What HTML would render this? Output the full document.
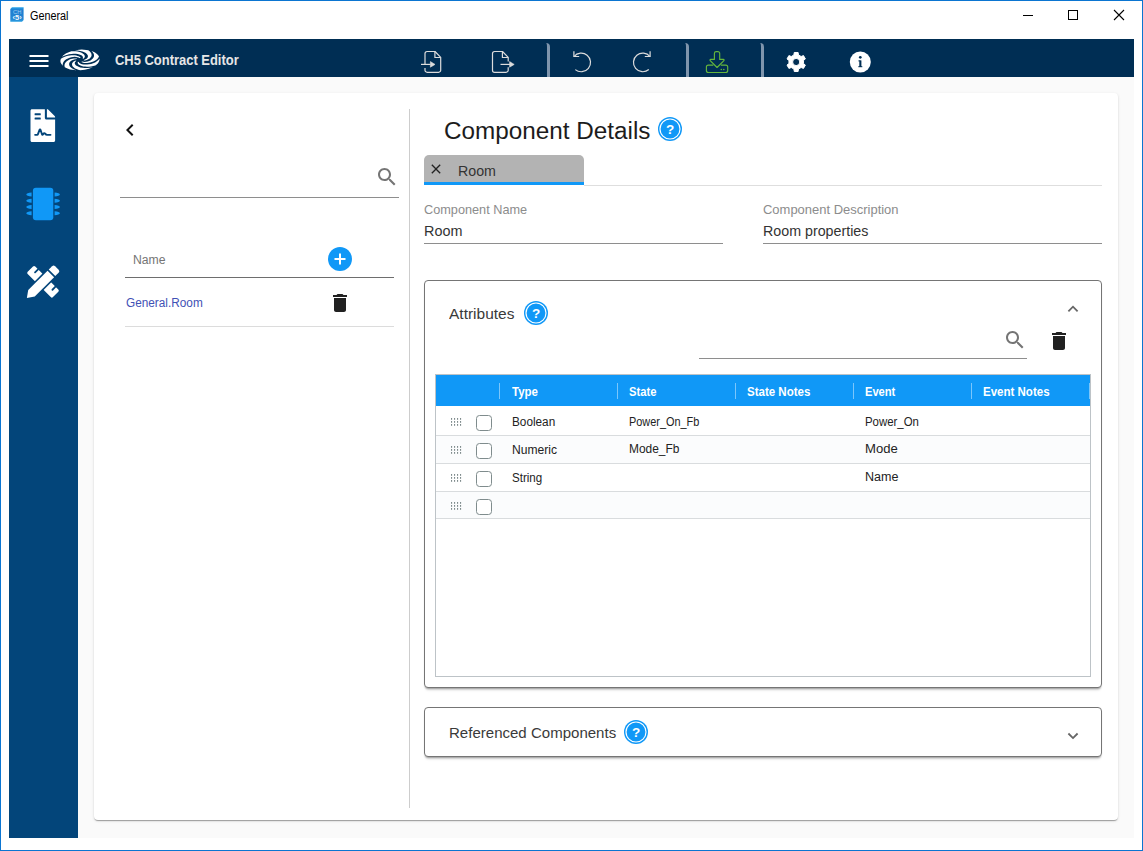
<!DOCTYPE html>
<html lang="en">
<head>
<meta charset="utf-8">
<title>General</title>
<style>
*{box-sizing:border-box;margin:0;padding:0}
html,body{width:1143px;height:851px;overflow:hidden;background:#fff}
body{font-family:"Liberation Sans",sans-serif;color:#212121;position:relative}
.abs{position:absolute}
#win{position:absolute;left:0;top:0;width:1143px;height:851px;border:1px solid #0b75d1;background:#fff}
.t{position:absolute;white-space:nowrap;line-height:1}
svg{position:absolute;overflow:visible}
/* title bar */
/* app */
#bar{left:9px;top:39px;width:1125px;height:38px;background:#002e54}
#side{left:9px;top:77px;width:69px;height:761px;background:#03457a}
#bg{left:78px;top:77px;width:1056px;height:761px;background:#fafafa}
#card{left:94px;top:93px;width:1024px;height:727px;background:#fff;border-radius:4px;box-shadow:0 2px 1px -1px rgba(0,0,0,.2),0 1px 1px 0 rgba(0,0,0,.14),0 1px 3px 0 rgba(0,0,0,.12)}
.sep{position:absolute;top:43px;width:4px;height:34px;border-right:3px solid #7f95ad;border-top-right-radius:4px}
.hl{position:absolute;height:1px}
.vl{position:absolute;width:1px}
.panel{position:absolute;border:1px solid #757575;border-radius:4px;background:#fff;box-shadow:0 2px 2px -1px rgba(0,0,0,.32),0 4px 3px -2px rgba(0,0,0,.12)}
</style>
</head>
<body>
<div id="win"></div>
<!-- title bar -->

<!-- title bar icon + controls -->
<svg style="left:10px;top:7px" width="14" height="15" viewBox="0 0 14 15">
  <defs><linearGradient id="gi" x1="0" y1="0" x2="0" y2="1"><stop offset="0" stop-color="#2aa4ea"/><stop offset=".18" stop-color="#1f7ed0"/><stop offset=".8" stop-color="#2385d3"/><stop offset="1" stop-color="#2b9fe2"/></linearGradient></defs>
  <path d="M2 0.3H13.6V13L12 14.7H0.3V2Z" fill="url(#gi)"/>
  <text x="7.2" y="7" font-family="Liberation Sans, sans-serif" font-size="6.2" fill="#9fcdf1" text-anchor="middle" textLength="8.4" lengthAdjust="spacingAndGlyphs">CH</text>
  <text x="7.1" y="13" font-family="Liberation Sans, sans-serif" font-size="6.6" font-weight="bold" fill="#eef7fe" text-anchor="middle" textLength="9.2" lengthAdjust="spacingAndGlyphs">‹5›</text>
</svg>
<svg style="left:1018px;top:5px" width="112" height="20" viewBox="1018 5 112 20" fill="none" stroke="#000" stroke-width="1">
  <path d="M1023 15.5H1033"/>
  <rect x="1068.5" y="10.5" width="9" height="9"/>
  <path d="M1114 10L1124 20M1124 10L1114 20" stroke-width="1.1"/>
</svg>
<!-- app chrome -->
<div class="abs" id="bar"></div>
<div class="abs" id="side"></div>
<div class="abs" id="bg"></div>
<div class="abs" id="card"></div>

<!-- toolbar -->
<svg style="left:9px;top:39px" width="1125" height="38" viewBox="9 39 1125 38">
  <g id="tb">
  <!-- hamburger -->
  <path d="M29.5 55h19v2h-19zM29.5 60h19v2h-19zM29.5 65h19v2h-19z" fill="#fff"/>
  <!-- swirl -->
  <path id="swirl" d="M78.8 62.0L79.1 62.7L79.8 63.3L80.7 63.8L82.0 64.2L83.5 64.5L85.2 64.6L87.1 64.6L89.1 64.3L91.1 63.9L93.2 63.2L95.1 62.4L96.8 61.3L98.4 60.0L99.6 58.6L99.5 59.8L99.2 61.0L98.6 62.2L97.8 63.4L96.7 64.5L95.4 65.6L93.2 66.1L91.1 66.5L89.0 66.7L87.0 66.7L85.1 66.6L83.4 66.4L81.8 66.0L80.5 65.6L79.5 65.0L78.6 64.4L78.1 63.8L77.7 63.1L77.7 62.5L77.8 61.8ZM76.3 60.9L75.6 61.5L75.0 62.2L74.8 62.9L74.8 63.7L75.2 64.6L76.0 65.4L77.1 66.1L78.6 66.8L80.3 67.4L82.4 67.7L84.8 67.9L87.3 67.9L90.0 67.7L92.8 67.2L90.9 68.0L89.0 68.7L86.9 69.3L84.7 69.8L82.5 70.1L80.2 70.3L78.2 69.8L76.5 69.1L75.0 68.4L73.9 67.6L73.0 66.7L72.4 65.9L72.1 65.0L72.0 64.1L72.2 63.3L72.7 62.5L73.3 61.8L74.1 61.2L75.1 60.7L76.1 60.4ZM76.6 59.1L75.4 59.2L74.1 59.5L72.8 59.9L71.6 60.5L70.6 61.2L69.8 62.1L69.3 63.1L69.1 64.2L69.3 65.3L69.9 66.4L70.9 67.5L72.3 68.6L74.1 69.5L76.3 70.3L74.1 70.1L72.0 69.8L70.0 69.4L68.1 68.8L66.4 68.1L64.8 67.3L64.5 66.1L64.5 64.9L64.8 63.8L65.4 62.7L66.2 61.8L67.2 60.9L68.3 60.2L69.5 59.6L70.9 59.1L72.2 58.7L73.6 58.5L74.9 58.4L76.2 58.5L77.3 58.6ZM79.5 58.0L78.6 57.5L77.5 57.2L76.2 56.9L74.7 56.8L73.0 56.9L71.3 57.2L69.6 57.7L67.9 58.4L66.3 59.2L64.9 60.3L63.8 61.5L63.1 62.8L62.7 64.2L62.7 65.7L61.8 64.6L61.1 63.5L60.6 62.4L60.4 61.2L60.5 60.0L60.9 58.8L62.5 57.8L64.2 57.0L66.1 56.3L67.9 55.8L69.8 55.5L71.6 55.3L73.3 55.3L74.9 55.3L76.4 55.6L77.6 55.9L78.7 56.3L79.6 56.8L80.2 57.3L80.6 57.9ZM82.7 58.4L82.9 57.7L82.9 57.0L82.5 56.3L81.8 55.6L80.7 55.0L79.3 54.4L77.7 54.0L75.8 53.8L73.6 53.8L71.4 53.9L69.0 54.3L66.6 54.9L64.3 55.7L62.1 56.8L63.1 55.6L64.4 54.6L65.8 53.6L67.5 52.7L69.4 51.9L71.3 51.2L73.6 51.2L75.8 51.3L77.8 51.6L79.5 52.1L81.1 52.6L82.4 53.2L83.4 53.9L84.1 54.6L84.6 55.4L84.8 56.1L84.8 56.9L84.5 57.6L84.0 58.2L83.4 58.8ZM83.9 60.0L85.0 59.6L86.0 59.1L86.9 58.4L87.5 57.7L87.9 56.8L87.9 55.8L87.6 54.9L86.8 53.9L85.8 53.0L84.3 52.2L82.4 51.4L80.2 50.9L77.7 50.5L74.9 50.3L77.2 49.9L79.5 49.7L81.7 49.6L84.0 49.7L86.2 49.9L88.3 50.2L89.6 51.2L90.5 52.2L91.2 53.2L91.5 54.3L91.6 55.3L91.4 56.2L90.9 57.1L90.2 58.0L89.4 58.7L88.4 59.3L87.3 59.8L86.1 60.2L84.9 60.4L83.7 60.6ZM82.2 61.6L83.3 61.8L84.7 61.9L86.1 61.8L87.6 61.5L89.1 61.0L90.5 60.4L91.7 59.6L92.8 58.6L93.5 57.5L94.0 56.3L94.0 55.0L93.7 53.7L92.9 52.4L91.6 51.1L93.4 51.8L95.0 52.6L96.3 53.5L97.5 54.5L98.4 55.5L99.0 56.6L98.3 57.8L97.3 58.9L96.1 59.9L94.8 60.8L93.3 61.5L91.8 62.1L90.2 62.5L88.6 62.8L87.1 63.0L85.6 63.0L84.3 62.9L83.1 62.7L82.0 62.3L81.2 61.9Z" fill="#fff"/>
  <!-- file import -->
  <g fill="none" stroke="#dcdcdc" stroke-width="1.2" stroke-linejoin="round">
    <path d="M425 64.4V53.6a2.1 2.1 0 0 1 2.1-2.1H435l5.7 5.9V70.2a2.1 2.1 0 0 1-2.1 2.1H427.1a2.1 2.1 0 0 1-2.1-2.1V68"/>
    <path d="M434.9 51.6V57.5h5.7"/>
    <path d="M421 64.4h9.6"/>
    <path d="M430.4 61.6L435 64.4L430.4 67.2Z" fill="#dcdcdc" stroke-width=".6"/>
  </g>
  <!-- file export -->
  <g fill="none" stroke="#dcdcdc" stroke-width="1.2" stroke-linejoin="round">
    <path d="M508.2 61.6V57.4L502.5 51.5H494.6a2.1 2.1 0 0 0-2.1 2.1V70.2a2.1 2.1 0 0 0 2.1 2.1H506.1a2.1 2.1 0 0 0 2.1-2.1V67.2"/>
    <path d="M502.4 51.6V57.5h5.7"/>
    <path d="M500.5 64.4h9.6"/>
    <path d="M509.6 61.6L514.2 64.4L509.6 67.2Z" fill="#dcdcdc" stroke-width=".6"/>
  </g>

  <!-- undo / redo -->
  <g fill="none" stroke="#dcdcdc" stroke-width="1.2">
    <path d="M574.0 56.6A9.3 9.3 0 1 1 575.3 69.6"/>
    <path d="M573.9 51.2V56.5H579.2"/>
    <path d="M650.0 56.6A9.3 9.3 0 1 0 648.8 69.5"/>
    <path d="M650.1 51.2V56.5H644.8"/>
  </g>
  <!-- download -->
  <g fill="none" stroke="#64b63c" stroke-width="1.15" stroke-linejoin="round">
    <path d="M713.3 65.1H708.4a2 2 0 0 0-2 2V70.5a2 2 0 0 0 2 2H725.7a2 2 0 0 0 2-2V67.1a2 2 0 0 0-2-2H720.8"/>
    <path d="M714.4 59.4V53.4a1.8 1.8 0 0 1 1.8-1.8H717.9a1.8 1.8 0 0 1 1.8 1.8V59.4H723.4a.7.7 0 0 1 .5 1.2L717.05 67.5L710.2 60.6a.7.7 0 0 1 .5-1.2Z"/>
  </g>
  <circle cx="721.3" cy="69.5" r=".8" fill="#64b63c"/><circle cx="723.8" cy="69.5" r=".8" fill="#64b63c"/>
  <!-- gear -->
  <g transform="translate(796.2 62)" fill="#fff">
    <path id="gear" d="M7.24 1.54L9.19 3.09L7.28 6.41L4.95 5.50L2.29 7.04L1.92 9.51L-1.92 9.51L-2.29 7.04L-4.95 5.50L-7.28 6.41L-9.19 3.09L-7.24 1.54L-7.24 -1.54L-9.19 -3.09L-7.28 -6.41L-4.95 -5.50L-2.29 -7.04L-1.92 -9.51L1.92 -9.51L2.29 -7.04L4.95 -5.50L7.28 -6.41L9.19 -3.09L7.24 -1.54ZM3.60 0A3.60 3.60 0 1 0 -3.60 0A3.60 3.60 0 1 0 3.60 0Z" stroke="#fff" stroke-width="1" stroke-linejoin="round" fill-rule="evenodd"/>
  </g>
  <!-- info -->
  <circle cx="860.3" cy="62" r="10.5" fill="#fff"/>
  <rect x="859.3" y="60.4" width="2.1" height="6.6" fill="#002e54"/>
  <rect x="858.4" y="60.4" width="2" height="1" fill="#002e54"/>
  <rect x="858.3" y="66.2" width="4" height="1" fill="#002e54"/>
  <circle cx="860.3" cy="57.3" r="1.35" fill="#002e54"/>
  </g>
</svg>
<div class="sep" style="left:546px"></div>
<div class="sep" style="left:685px"></div>
<div class="sep" style="left:760px"></div>

<!-- sidebar icons -->
<svg style="left:9px;top:77px" width="69" height="761" viewBox="9 77 69 761">
  <!-- file-contract -->
  <g transform="translate(30.5 109.2) scale(0.0641)" fill="#fff">
    <path d="M224 136V0H24C10.7 0 0 10.7 0 24v464c0 13.300 10.700 24 24 24h336c13.300 0 24-10.700 24-24V160H248c-13.200 0-24-10.800-24-24z"/>
    <path d="M384 121.900v6.100H256V0h6.100c6.400 0 12.500 2.500 17 7l97.900 98c4.500 4.500 7 10.600 7 16.900z"/>
    <rect x="64" y="64" width="96" height="32" rx="8" fill="#03457a"/>
    <rect x="64" y="128" width="96" height="32" rx="8" fill="#03457a"/>
    <path d="M72 400h30c8 0 13-6 16-14l22-62c3-9 14-9 17 0l24 70c2 7 9 8 13 2l8-13c6-10 19-10 26-1 8 11 16 18 30 18h54" fill="none" stroke="#03457a" stroke-width="30" stroke-linecap="round" stroke-linejoin="round"/>
  </g>
  <!-- microchip (active) -->
  <g fill="#1098f7">
    <rect x="32.900" y="187.700" width="20.400" height="32.500" rx="3"/>
    <path d="M31.600 192.500v4q-5-.3-5.300-2q.3-1.700 5.300-2zM31.600 198.800v4q-5-.3-5.300-2q.3-1.700 5.300-2zM31.600 205v4q-5-.3-5.300-2q.3-1.700 5.300-2zM31.600 211.300v4q-5-.3-5.300-2q.3-1.700 5.300-2z"/>
    <path d="M54.600 192.500v4q5-.3 5.300-2q-.3-1.700-5.300-2zM54.600 198.800v4q5-.3 5.300-2q-.3-1.700-5.300-2zM54.600 205v4q5-.3 5.300-2q-.3-1.700-5.300-2zM54.600 211.300v4q5-.3 5.300-2q-.3-1.700-5.300-2z"/>
  </g>
  <!-- pencil-ruler -->
  <g transform="translate(43 281.800)">
    <g transform="rotate(45)">
      <rect x="-17.900" y="-5.350" width="35.800" height="10.700" rx="1.600" fill="#fff"/>
      <path d="M-12.300 -5.350v4.300" fill="none" stroke="#03457a" stroke-width="1.800" stroke-linecap="round"/>
      <path d="M12.300 -5.350v4.300" fill="none" stroke="#03457a" stroke-width="1.800" stroke-linecap="round"/>
    </g>
    <g transform="rotate(-45)">
      <path d="M-17 -6.200H21V6.200H-17L-25.300 0Z" fill="#03457a"/>
      <path d="M-16.300 -4.600H11.100V4.600H-16.300L-22.800 0Z" fill="#fff"/>
      <path d="M12.700 -4.600H17.500a2.100 2.100 0 0 1 2.100 2.100V2.500a2.100 2.100 0 0 1-2.100 2.100H12.700Z" fill="#fff"/>
    </g>
  </g>
</svg>
<svg style="left:118px;top:118.3px" width="24" height="24" viewBox="0 0 24 24"><path d="M15.410 16.590L10.830 12l4.580-4.590L14 6l-6 6 6 6 1.410-1.410z" fill="#111"/></svg>
<svg style="left:374.7px;top:165px" width="24" height="24" viewBox="0 0 24 24"><path d="M15.5 14h-.79l-.28-.27C15.41 12.59 16 11.11 16 9.5 16 5.91 13.09 3 9.5 3S3 5.91 3 9.5 5.91 16 9.5 16c1.61 0 3.09-.59 4.23-1.57l.27.28v.79l5 4.990L20.490 19l-4.990-5zm-6 0C7.010 14 5 11.990 5 9.500S7.010 5 9.500 5 14 7.010 14 9.500 11.990 14 9.500 14z" fill="#757575"/></svg>
<div class="hl" style="left:120px;top:197px;width:279px;height:1px;background:#8e8e8e"></div>
<div class="hl" style="left:125px;top:277px;width:269px;height:1px;background:#6e6e6e"></div>
<div class="hl" style="left:125px;top:326px;width:269px;height:1px;background:#dcdcdc"></div>
<svg style="left:328px;top:247px" width="24" height="24" viewBox="0 0 24 24"><circle cx="12" cy="12" r="12" fill="#1098f7"/><path d="M6.500 11h11v2h-11zM11 6.500h2v11h-2z" fill="#fff"/></svg>
<svg style="left:328px;top:291px" width="24" height="24" viewBox="0 0 24 24"><path d="M6 19c0 1.100.900 2 2 2h8c1.100 0 2-.900 2-2V7H6v12zM19 4h-3.500l-1-1h-5l-1 1H5v2h14V4z" fill="#212121"/></svg>
<div class="vl" style="left:409px;top:109px;height:699px;width:1px;background:#cdcdcd"></div>
<svg style="left:658px;top:117px" width="24" height="24" viewBox="0 0 24 24"><circle cx="12" cy="12" r="12" fill="#1098f7"/><circle cx="12" cy="12" r="10" fill="none" stroke="#fff" stroke-width="1.150"/><text x="12" y="16.800" text-anchor="middle" font-family="Liberation Sans, sans-serif" font-weight="bold" font-size="13.500" fill="#fff">?</text></svg>
<div class="abs" style="left:424px;top:155px;width:160px;height:30px;background:#b3b3b3;border-radius:5px 5px 0 0;border-bottom:3px solid #1098f7"></div>
<div class="hl" style="left:584px;top:184.5px;width:518px;height:1px;background:#dedede"></div>
<svg style="left:428px;top:161.3px" width="16" height="16" viewBox="0 0 24 24"><path d="M19 6.410L17.590 5 12 10.590 6.410 5 5 6.410 10.590 12 5 17.590 6.410 19 12 13.410 17.590 19 19 17.590 13.410 12z" fill="#222"/></svg>
<div class="hl" style="left:424px;top:243px;width:299px;height:1px;background:#8e8e8e"></div>
<div class="hl" style="left:763px;top:243px;width:339px;height:1px;background:#8e8e8e"></div>
<div class="panel" style="left:424px;top:280px;width:678px;height:408px"></div>
<svg style="left:524px;top:301px" width="24" height="24" viewBox="0 0 24 24"><circle cx="12" cy="12" r="12" fill="#1098f7"/><circle cx="12" cy="12" r="10" fill="none" stroke="#fff" stroke-width="1.150"/><text x="12" y="16.800" text-anchor="middle" font-family="Liberation Sans, sans-serif" font-weight="bold" font-size="13.500" fill="#fff">?</text></svg>
<svg style="left:1066px;top:304px" width="14" height="10" viewBox="1066 304 14 10"><path d="M1068.400 311.300L1073 306.700L1077.600 311.300" fill="none" stroke="#666" stroke-width="1.800"/></svg>
<svg style="left:1002.7px;top:328.3px" width="24" height="24" viewBox="0 0 24 24"><path d="M15.5 14h-.79l-.28-.27C15.41 12.59 16 11.11 16 9.5 16 5.91 13.09 3 9.5 3S3 5.91 3 9.5 5.91 16 9.5 16c1.61 0 3.09-.59 4.23-1.57l.27.28v.79l5 4.990L20.490 19l-4.990-5zm-6 0C7.010 14 5 11.990 5 9.500S7.010 5 9.500 5 14 7.010 14 9.500 11.990 14 9.500 14z" fill="#757575"/></svg>
<svg style="left:1046.6px;top:329px" width="24" height="24" viewBox="0 0 24 24"><path d="M6 19c0 1.100.900 2 2 2h8c1.100 0 2-.900 2-2V7H6v12zM19 4h-3.500l-1-1h-5l-1 1H5v2h14V4z" fill="#212121"/></svg>
<div class="hl" style="left:699px;top:358px;width:328px;height:1px;background:#8e8e8e"></div>
<div class="abs" style="left:435px;top:374px;width:656px;height:303px;border:1px solid #bdc3c7;background:#fff"></div>
<div class="abs" style="left:436px;top:375px;width:654px;height:31px;background:#1098f7"></div>
<div class="vl" style="left:499px;top:383px;height:16px;width:1px;background:rgba(255,255,255,.45)"></div>
<div class="vl" style="left:617px;top:383px;height:16px;width:1px;background:rgba(255,255,255,.45)"></div>
<div class="vl" style="left:735px;top:383px;height:16px;width:1px;background:rgba(255,255,255,.45)"></div>
<div class="vl" style="left:853px;top:383px;height:16px;width:1px;background:rgba(255,255,255,.45)"></div>
<div class="vl" style="left:971px;top:383px;height:16px;width:1px;background:rgba(255,255,255,.45)"></div>
<div class="vl" style="left:1089px;top:383px;height:16px;width:1px;background:rgba(255,255,255,.45)"></div>
<div class="abs" style="left:436px;top:406px;width:654px;height:30px;background:#fff;border-bottom:1px solid #d9dcde"></div>
<svg style="left:451px;top:418px" width="11" height="9" viewBox="0 0 11 9" fill="#7f8c8d"><rect x="0" y="0" width="1.100" height="1.800"/><rect x="0" y="3" width="1.100" height="1.800"/><rect x="0" y="6" width="1.100" height="1.800"/><rect x="3" y="0" width="1.100" height="1.800"/><rect x="3" y="3" width="1.100" height="1.800"/><rect x="3" y="6" width="1.100" height="1.800"/><rect x="6" y="0" width="1.100" height="1.800"/><rect x="6" y="3" width="1.100" height="1.800"/><rect x="6" y="6" width="1.100" height="1.800"/><rect x="9" y="0" width="1.100" height="1.800"/><rect x="9" y="3" width="1.100" height="1.800"/><rect x="9" y="6" width="1.100" height="1.800"/></svg>
<div class="abs" style="left:476px;top:415px;width:16px;height:16px;border:1.500px solid #7f8c8d;border-radius:3.500px;background:#fff"></div>
<div class="abs" style="left:436px;top:436px;width:654px;height:28px;background:#fbfcfd;border-bottom:1px solid #d9dcde"></div>
<svg style="left:451px;top:446px" width="11" height="9" viewBox="0 0 11 9" fill="#7f8c8d"><rect x="0" y="0" width="1.100" height="1.800"/><rect x="0" y="3" width="1.100" height="1.800"/><rect x="0" y="6" width="1.100" height="1.800"/><rect x="3" y="0" width="1.100" height="1.800"/><rect x="3" y="3" width="1.100" height="1.800"/><rect x="3" y="6" width="1.100" height="1.800"/><rect x="6" y="0" width="1.100" height="1.800"/><rect x="6" y="3" width="1.100" height="1.800"/><rect x="6" y="6" width="1.100" height="1.800"/><rect x="9" y="0" width="1.100" height="1.800"/><rect x="9" y="3" width="1.100" height="1.800"/><rect x="9" y="6" width="1.100" height="1.800"/></svg>
<div class="abs" style="left:476px;top:443px;width:16px;height:16px;border:1.500px solid #7f8c8d;border-radius:3.500px;background:#fff"></div>
<div class="abs" style="left:436px;top:464px;width:654px;height:28px;background:#fff;border-bottom:1px solid #d9dcde"></div>
<svg style="left:451px;top:474px" width="11" height="9" viewBox="0 0 11 9" fill="#7f8c8d"><rect x="0" y="0" width="1.100" height="1.800"/><rect x="0" y="3" width="1.100" height="1.800"/><rect x="0" y="6" width="1.100" height="1.800"/><rect x="3" y="0" width="1.100" height="1.800"/><rect x="3" y="3" width="1.100" height="1.800"/><rect x="3" y="6" width="1.100" height="1.800"/><rect x="6" y="0" width="1.100" height="1.800"/><rect x="6" y="3" width="1.100" height="1.800"/><rect x="6" y="6" width="1.100" height="1.800"/><rect x="9" y="0" width="1.100" height="1.800"/><rect x="9" y="3" width="1.100" height="1.800"/><rect x="9" y="6" width="1.100" height="1.800"/></svg>
<div class="abs" style="left:476px;top:471px;width:16px;height:16px;border:1.500px solid #7f8c8d;border-radius:3.500px;background:#fff"></div>
<div class="abs" style="left:436px;top:492px;width:654px;height:27px;background:#fbfcfd;border-bottom:1px solid #d9dcde"></div>
<svg style="left:451px;top:502px" width="11" height="9" viewBox="0 0 11 9" fill="#7f8c8d"><rect x="0" y="0" width="1.100" height="1.800"/><rect x="0" y="3" width="1.100" height="1.800"/><rect x="0" y="6" width="1.100" height="1.800"/><rect x="3" y="0" width="1.100" height="1.800"/><rect x="3" y="3" width="1.100" height="1.800"/><rect x="3" y="6" width="1.100" height="1.800"/><rect x="6" y="0" width="1.100" height="1.800"/><rect x="6" y="3" width="1.100" height="1.800"/><rect x="6" y="6" width="1.100" height="1.800"/><rect x="9" y="0" width="1.100" height="1.800"/><rect x="9" y="3" width="1.100" height="1.800"/><rect x="9" y="6" width="1.100" height="1.800"/></svg>
<div class="abs" style="left:476px;top:499px;width:16px;height:16px;border:1.500px solid #7f8c8d;border-radius:3.500px;background:#fff"></div>
<div class="panel" style="left:424px;top:707px;width:678px;height:50px"></div>
<svg style="left:624px;top:720px" width="24" height="24" viewBox="0 0 24 24"><circle cx="12" cy="12" r="12" fill="#1098f7"/><circle cx="12" cy="12" r="10" fill="none" stroke="#fff" stroke-width="1.150"/><text x="12" y="16.800" text-anchor="middle" font-family="Liberation Sans, sans-serif" font-weight="bold" font-size="13.500" fill="#fff">?</text></svg>
<svg style="left:1066px;top:730px" width="14" height="10" viewBox="1066 730 14 10"><path d="M1068.400 733.500L1073 738.100L1077.600 733.500" fill="none" stroke="#666" stroke-width="1.800"/></svg>
<div class="t" id="ttl" style="left:30px;top:10.42px;font-size:12.5px;font-weight:normal;color:#000;transform-origin:0 0;transform:scaleX(0.8660)">General</div>
<div class="t" id="appname" style="left:115.2px;top:53.15px;font-size:14px;font-weight:bold;color:#e6e6e6;transform-origin:0 0;transform:scaleX(0.9245)">CH5 Contract Editor</div>
<div class="t" id="hName" style="left:132.9px;top:253.84px;font-size:12px;font-weight:normal;color:#757575;transform-origin:0 0;transform:scaleX(1.0164)">Name</div>
<div class="t" id="rName" style="left:125.9px;top:296.84px;font-size:12px;font-weight:normal;color:#3f51b5;transform-origin:0 0;transform:scaleX(0.9835)">General.Room</div>
<div class="t" id="h1" style="left:443.9px;top:120.11px;font-size:23.5px;font-weight:normal;color:#1c1c1c;transform-origin:0 0;transform:scaleX(1.0328)">Component Details</div>
<div class="t" id="tabRoom" style="left:457.9px;top:164.15px;font-size:14px;font-weight:normal;color:#333;transform-origin:0 0;transform:scaleX(1.0168)">Room</div>
<div class="t" id="lblName" style="left:423.6px;top:203.67px;font-size:12.2px;font-weight:normal;color:#8c8c8c;transform-origin:0 0;transform:scaleX(1.0429)">Component Name</div>
<div class="t" id="valName" style="left:423.7px;top:224.15px;font-size:14px;font-weight:normal;color:#333;transform-origin:0 0;transform:scaleX(1.0278)">Room</div>
<div class="t" id="lblDesc" style="left:762.7px;top:203.67px;font-size:12.2px;font-weight:normal;color:#8c8c8c;transform-origin:0 0;transform:scaleX(1.0643)">Component Description</div>
<div class="t" id="valDesc" style="left:762.7px;top:224.15px;font-size:14px;font-weight:normal;color:#333;transform-origin:0 0;transform:scaleX(1.0184)">Room properties</div>
<div class="t" id="attr" style="left:448.8px;top:306.30px;font-size:15px;font-weight:normal;color:#3a3a3a;transform-origin:0 0;transform:scaleX(1.0335)">Attributes</div>
<div class="t" id="refc" style="left:448.9px;top:725.30px;font-size:15px;font-weight:normal;color:#3a3a3a;transform-origin:0 0;transform:scaleX(1.0024)">Referenced Components</div>
<div class="t" id="gh1" style="left:511.8px;top:385.84px;font-size:12px;font-weight:bold;color:#fff;transform-origin:0 0;transform:scaleX(0.9559)">Type</div>
<div class="t" id="gh2" style="left:629.4px;top:385.84px;font-size:12px;font-weight:bold;color:#fff;transform-origin:0 0;transform:scaleX(0.9350)">State</div>
<div class="t" id="gh3" style="left:747.4px;top:385.84px;font-size:12px;font-weight:bold;color:#fff;transform-origin:0 0;transform:scaleX(0.9600)">State Notes</div>
<div class="t" id="gh4" style="left:865.1px;top:385.84px;font-size:12px;font-weight:bold;color:#fff;transform-origin:0 0;transform:scaleX(0.9282)">Event</div>
<div class="t" id="gh5" style="left:983.3px;top:385.84px;font-size:12px;font-weight:bold;color:#fff;transform-origin:0 0;transform:scaleX(0.9595)">Event Notes</div>
<div class="t" id="c11" style="left:511.6px;top:415.84px;font-size:12px;font-weight:normal;color:#222;transform-origin:0 0;transform:scaleX(0.9815)">Boolean</div>
<div class="t" id="c12" style="left:629.3px;top:415.84px;font-size:12px;font-weight:normal;color:#222;transform-origin:0 0;transform:scaleX(0.9079)">Power_On_Fb</div>
<div class="t" id="c14" style="left:865.1px;top:415.84px;font-size:12px;font-weight:normal;color:#222;transform-origin:0 0;transform:scaleX(0.9498)">Power_On</div>
<div class="t" id="c21" style="left:511.8px;top:443.84px;font-size:12px;font-weight:normal;color:#222;transform-origin:0 0;transform:scaleX(1.0069)">Numeric</div>
<div class="t" id="c22" style="left:629.3px;top:442.84px;font-size:12px;font-weight:normal;color:#222;transform-origin:0 0;transform:scaleX(0.9943)">Mode_Fb</div>
<div class="t" id="c24" style="left:865.1px;top:442.84px;font-size:12px;font-weight:normal;color:#222;transform-origin:0 0;transform:scaleX(1.0898)">Mode</div>
<div class="t" id="c31" style="left:511.8px;top:471.84px;font-size:12px;font-weight:normal;color:#222;transform-origin:0 0;transform:scaleX(0.9649)">String</div>
<div class="t" id="c34" style="left:865.1px;top:470.84px;font-size:12px;font-weight:normal;color:#222;transform-origin:0 0;transform:scaleX(1.0457)">Name</div>

</body>
</html>
